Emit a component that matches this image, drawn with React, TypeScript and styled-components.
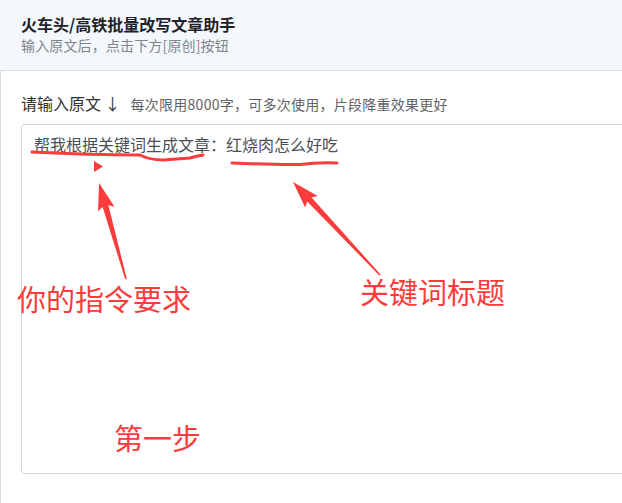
import styled, { createGlobalStyle } from "styled-components";

const GlobalStyle = createGlobalStyle`
  html, body {
    margin: 0;
    padding: 0;
    background: #fff;
  }
  body {
    font-family: "Noto Sans CJK SC", "Noto Sans", sans-serif;
  }
`;

const RED = "#fa3c3c";

const sentence = "帮我根据关键词生成文章：红烧肉怎么好吃";

type Pt = [number, number];

// tapered arrow polygon from tail to tip
const arrowPoints = (tail: Pt, tip: Pt) => {
  const dx = tip[0] - tail[0];
  const dy = tip[1] - tail[1];
  const len = Math.hypot(dx, dy);
  const ux = dx / len;
  const uy = dy / len;
  const nx = -uy;
  const ny = ux;
  const headLen = 24;
  const bx = tip[0] - ux * headLen;
  const by = tip[1] - uy * headLen;
  const at = (x: number, y: number, w: number, back = 0): string =>
    `${(x + nx * w - ux * back).toFixed(1)},${(y + ny * w - uy * back).toFixed(1)}`;
  return [
    at(tail[0], tail[1], 0.8),
    at(bx, by, 3),
    at(bx, by, 8.5, 3),
    `${tip[0]},${tip[1]}`,
    at(bx, by, -8.5, 3),
    at(bx, by, -3),
    at(tail[0], tail[1], -0.8),
  ].join(" ");
};

const labels = [
  { text: "你的指令要求", left: 17, top: 284 },
  { text: "关键词标题", left: 360, top: 277 },
  { text: "第一步", left: 114, top: 423 },
];

const App = () => {
  return (
    <>
      <GlobalStyle />
      <Page>
        <Header>
          <Title>火车头/高铁批量改写文章助手</Title>
          <SubTitle>输入原文后，点击下方[原创]按钮</SubTitle>
        </Header>
        <Body>
          <LabelRow>
            <Label>请输入原文 ↓</Label>
            <Hint>每次限用8000字，可多次使用，片段降重效果更好</Hint>
          </LabelRow>
          <Editor readOnly defaultValue={sentence} />
        </Body>

        <Marks viewBox="0 0 622 503" width="622" height="503">
          <path
            d="M32 152 Q90 155 140 155 Q150 160 163 160 L190 158 Q197 156 203 155"
            fill="none"
            stroke={RED}
            strokeWidth="3"
            strokeLinecap="round"
          />
          <path
            d="M232 163 Q280 165 300 164.5 Q320 162 337 163"
            fill="none"
            stroke={RED}
            strokeWidth="3"
            strokeLinecap="round"
          />
          <polygon points="94,161 103,166.5 94,172" fill={RED} />
          <polygon points={arrowPoints([126, 279], [99, 183])} fill={RED} />
          <polygon points={arrowPoints([380, 275], [293, 182])} fill={RED} />
        </Marks>

        {labels.map((l) => (
          <Note key={l.text} style={{ left: l.left, top: l.top }}>
            {l.text}
          </Note>
        ))}
      </Page>
    </>
  );
};

export default App;

const Page = styled.div`
  position: relative;
  width: 622px;
  height: 503px;
  overflow: hidden;
  box-shadow: inset 1px 0 0 #dcdcdc;
`;

const Header = styled.div`
  box-sizing: border-box;
  height: 71px;
  padding: 13px 21px 0;
  background: #f4f8fc;
  border-bottom: 1px solid #d9dee5;
`;

const Title = styled.div`
  font-size: 16px;
  font-weight: 700;
  line-height: 22px;
  color: #1f2329;
`;

const SubTitle = styled.div`
  font-size: 14px;
  line-height: 20px;
  letter-spacing: 0.15px;
  color: #7d848c;
`;

const Body = styled.div`
  padding: 21px 0 0 21px;
`;

const LabelRow = styled.div`
  display: flex;
  align-items: baseline;
  gap: 10px;
  height: 22px;
`;

const Label = styled.span`
  font-size: 16px;
  line-height: 22px;
  color: #333;
`;

const Hint = styled.span`
  font-size: 14px;
  line-height: 22px;
  letter-spacing: 0.25px;
  color: #606266;
`;

const Editor = styled.textarea`
  display: block;
  box-sizing: border-box;
  margin-top: 10px;
  width: 640px;
  height: 350px;
  padding: 8px 12px;
  border: 1px solid #d3d6dc;
  border-radius: 4px;
  font-family: "Noto Sans CJK SC", "Noto Sans", sans-serif;
  font-size: 16px;
  line-height: 22px;
  color: #4a4f57;
  resize: none;
  outline: none;
  overflow: hidden;
`;

const Marks = styled.svg`
  position: absolute;
  left: 0;
  top: 0;
  pointer-events: none;
`;

const Note = styled.span`
  position: absolute;
  font-size: 29px;
  line-height: 1;
  color: ${RED};
  white-space: nowrap;
  pointer-events: none;
`;
